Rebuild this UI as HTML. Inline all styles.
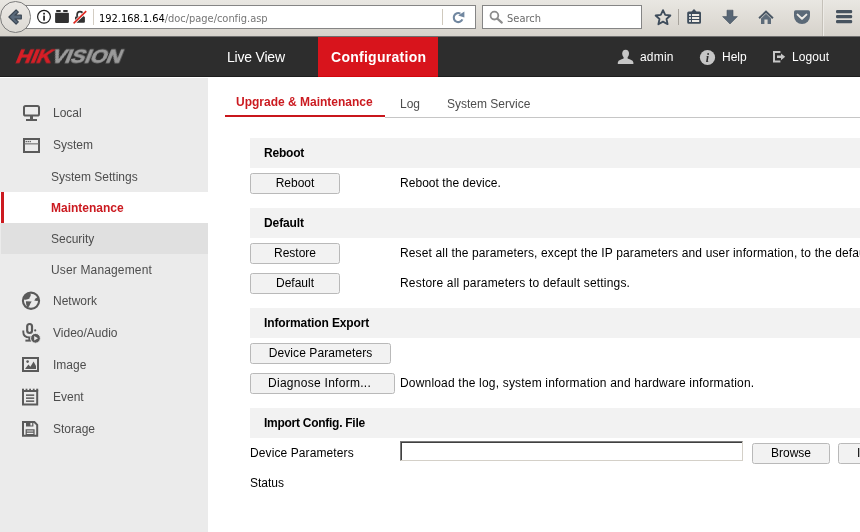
<!DOCTYPE html>
<html>
<head>
<meta charset="utf-8">
<title>Configuration</title>
<style>
html,body{margin:0;padding:0;}
body{width:860px;height:532px;overflow:hidden;position:relative;background:#fff;font-family:"Liberation Sans",sans-serif;font-size:12px;color:#000;}
div,span{box-sizing:border-box;}
.abs{position:absolute;white-space:nowrap;}
/* browser chrome */
#chrome{position:absolute;left:0;top:0;width:860px;height:36px;background:linear-gradient(#e9e7e2,#d6d2cb);}
#urlbar{position:absolute;left:20px;top:5px;width:456px;height:24px;background:#fff;border:1px solid #858585;border-left:none;}
#back{position:absolute;left:-0.5px;top:1px;width:31.5px;height:31.5px;border-radius:50%;background:linear-gradient(#ebe9e5,#dddad4);border:1px solid #7c7c7c;}
#search{position:absolute;left:482px;top:5px;width:160px;height:24px;background:#fff;border:1px solid #858585;}
.ctext{font-family:"DejaVu Sans Condensed","DejaVu Sans","Liberation Sans",sans-serif;font-size:11px;}
/* header */
#hdr{position:absolute;left:0;top:36px;width:860px;height:41px;background:#2d2d2d;border-bottom:1px solid #1d1d1d;}
#cfg{position:absolute;left:318px;top:0;width:120px;height:41px;background:#d8141c;border-bottom:1px solid #d2050d;}
.nav{position:absolute;color:#fff;font-size:14px;line-height:16px;white-space:nowrap;}
/* sidebar */
#side{position:absolute;left:0;top:77px;width:208px;height:455px;background:#ebebeb;}
.mi{position:absolute;left:0;width:208px;height:31px;line-height:31px;color:#4d4d4d;font-size:12px;white-space:nowrap;}
.mi span{position:absolute;left:53px;top:1px;}
.sub span{left:51px;}
/* main */
.sec{position:absolute;left:250px;width:610px;height:30px;background:#f2f2f2;font-weight:bold;font-size:12px;line-height:30px;padding-left:14px;white-space:nowrap;}
.btn{position:absolute;left:250px;width:90px;height:21px;border:1px solid #b9b9b9;border-radius:2.5px;background:#f2f2f2;text-align:center;font-size:12px;line-height:19px;white-space:nowrap;}
.txt{position:absolute;font-size:12px;line-height:14px;white-space:nowrap;}
.mi span,.txt,.btn,.sec,.nav,.ctext,#logo,.tab{will-change:transform;}
</style>
</head>
<body>
<div id="chrome">
  <div id="urlbar"></div>
  <div id="search"></div>
  <div id="back"></div>
  <svg class="abs" style="left:0;top:0;" width="860" height="36" viewBox="0 0 860 36">
    <!-- back arrow -->
    <path d="M8.9 17 L16.1 9.9 L18.3 12.1 L15 15.2 L21.3 15.2 L21.3 18.8 L15 18.8 L18.3 21.9 L16.1 24.1 Z" fill="#5a6a7b" stroke="#3a4653" stroke-width="1.2" stroke-linejoin="round"/>
    <!-- info -->
    <circle cx="44" cy="16.8" r="6.4" fill="#fff" stroke="#1d1d1d" stroke-width="1.2"/>
    <rect x="43.2" y="15.6" width="1.7" height="5" fill="#1d1d1d"/>
    <rect x="43.2" y="12.8" width="1.7" height="1.7" fill="#1d1d1d"/>
    <!-- brick -->
    <rect x="55.1" y="12.7" width="13.8" height="10.2" rx="0.8" fill="#313131"/>
    <rect x="56.1" y="10.1" width="4.7" height="1.8" rx="0.6" fill="#313131"/>
    <rect x="63.1" y="10.1" width="4.7" height="1.8" rx="0.6" fill="#313131"/>
    <!-- lock w/ slash -->
    <rect x="75" y="16.5" width="9.9" height="6.2" rx="1" fill="#313131"/>
    <path d="M77.1 16.8 v-2 a2.9 3.1 0 0 1 5.8 0 v2" fill="none" stroke="#313131" stroke-width="1.7"/>
    <path d="M73.2 23.8 L86.6 10.8" stroke="#fff" stroke-width="3"/>
    <path d="M73.6 23.4 L86.2 11.1" stroke="#dc261e" stroke-width="1.6"/>
    <!-- separators in urlbar -->
    <rect x="93" y="9" width="1" height="16" fill="#d3cdc3"/>
    <rect x="442" y="9" width="1" height="16" fill="#cfc9bd"/>
    <!-- reload -->
    <path d="M462.4 19.4 A4.5 4.5 0 1 1 460.4 13.6" fill="none" stroke="#7187a0" stroke-width="2.1"/>
    <path d="M458.2 15.6 L464.4 11.4 L464.4 17.6 Z" fill="#7187a0"/>
    <!-- magnifier -->
    <circle cx="494.4" cy="15.6" r="3.9" fill="none" stroke="#8c8c8c" stroke-width="1.8"/>
    <path d="M497.3 18.6 L501.8 22.6" stroke="#8c8c8c" stroke-width="2.2" stroke-linecap="round"/>
    <!-- star -->
    <path d="M663.0 10.1 L665.2 14.9 L670.4 15.5 L666.5 19.0 L667.6 24.2 L663.0 21.6 L658.4 24.2 L659.5 19.0 L655.6 15.5 L660.8 14.9 Z" fill="none" stroke="#3e4c5b" stroke-width="1.8" stroke-linejoin="round"/>
    <rect x="678" y="9" width="1" height="16" fill="#a7a39c"/>
    <!-- bookmarks list -->
    <path d="M691.5 11.5 L694 9 L696.5 11.5 L699.5 11.5 Q701 11.5 701 13 L701 22.2 Q701 23.7 699.5 23.7 L688.7 23.7 Q687.2 23.7 687.2 22.2 L687.2 13 Q687.2 11.5 688.7 11.5 Z" fill="#3e4c5b"/>
    <rect x="689" y="14" width="2" height="2" fill="#cfd3d6"/>
    <rect x="692" y="14" width="7.2" height="2" fill="#efece6"/>
    <rect x="689" y="17" width="2" height="2" fill="#cfd3d6"/>
    <rect x="692" y="17" width="7.2" height="2" fill="#efece6"/>
    <rect x="689" y="20" width="2" height="2" fill="#cfd3d6"/>
    <rect x="692" y="20" width="7.2" height="2" fill="#efece6"/>
    <!-- download -->
    <path d="M727 10.2 L733 10.2 L733 16.6 L737.4 16.6 L730 24 L722.6 16.6 L727 16.6 Z" fill="#586675" stroke="#46535f" stroke-width="0.6"/>
    <!-- home -->
    <path d="M758.4 17.6 L766 10.2 L773.6 17.6 L772.2 18.9 L766 12.9 L759.8 18.9 Z" fill="#4a5764"/>
    <path d="M761 18.4 L766 13.8 L771 18.4 L771 24 L767.6 24 L767.6 19.6 L764.4 19.6 L764.4 24 L761 24 Z" fill="#5d6b79"/>
    <!-- pocket -->
    <path d="M795.6 10.2 L808.4 10.2 Q810 10.2 810 11.8 L810 16 A8 8 0 0 1 794 16 L794 11.8 Q794 10.2 795.6 10.2 Z" fill="#5b6977"/>
    <path d="M797.6 14.6 L802 18.8 L806.4 14.6" fill="none" stroke="#eceae5" stroke-width="2" stroke-linecap="round" stroke-linejoin="round"/>
    <!-- right separator -->
    <rect x="822" y="0" width="1" height="36" fill="#c5c1b9"/>
    <rect x="823" y="0" width="1" height="36" fill="#edebe7"/>
    <!-- hamburger -->
    <rect x="836" y="10" width="16.2" height="3.2" rx="1.2" fill="#47535f"/>
    <rect x="836" y="15" width="16.2" height="3.2" rx="1.2" fill="#47535f"/>
    <rect x="836" y="20" width="16.2" height="3.2" rx="1.2" fill="#47535f"/>
  </svg>
  <div class="abs ctext" style="left:99px;top:11px;line-height:16px;color:#000;letter-spacing:-0.03px;">192.168.1.64<span style="color:#757575;">/doc/page/config.asp</span></div>
  <div class="abs ctext" style="left:507px;top:11px;line-height:16px;color:#6a6a6a;">Search</div>
</div>
<div style="position:absolute;left:0;top:36px;width:860px;height:1px;background:#6e6e6e;z-index:5;"></div>
<div id="hdr">
  <div class="abs" id="logo" style="left:12.5px;top:11px;font-size:18.5px;line-height:20px;font-weight:bold;letter-spacing:-0.2px;color:#d81e26;-webkit-text-stroke:0.7px currentColor;transform-origin:0 100%;transform:skewX(-22deg) scaleX(1.135);">HIK<span style="color:#9b9b9b;-webkit-text-stroke:0.7px #9b9b9b;">VISION</span></div>
  <div class="nav" style="left:227px;top:13px;letter-spacing:-0.2px;">Live View</div>
  <div id="cfg"></div>
  <div class="nav" style="left:331px;top:13px;font-weight:bold;letter-spacing:0.27px;">Configuration</div>
  <svg class="abs" style="left:600px;top:0;will-change:transform;" width="260" height="40" viewBox="600 36 260 40">
    <!-- user -->
    <ellipse cx="625.6" cy="53.6" rx="3.4" ry="3.9" fill="#c6c6c6"/>
    <path d="M617.8 63.9 L617.8 62.4 Q617.8 60.6 621 59.6 L623.6 58.6 L623.6 56 L627.6 56 L627.6 58.6 L630.2 59.6 Q633.4 60.6 633.4 62.4 L633.4 63.9 Z" fill="#c6c6c6"/>
    <!-- help -->
    <circle cx="707.5" cy="57.5" r="7.6" fill="#c6c6c6"/>
    <text x="707.4" y="61.8" font-family="Liberation Serif, serif" font-style="italic" font-weight="bold" font-size="12" text-anchor="middle" fill="#2d2d2d">i</text>
    <!-- logout -->
    <path d="M780.4 51.9 L774 51.9 L774 61.5 L780.4 61.5" fill="none" stroke="#c6c6c6" stroke-width="2"/>
    <path d="M777 55.6 L781 55.6 L781 53.4 L785.2 56.8 L781 60.2 L781 58 L777 58 Z" fill="#c6c6c6"/>
  </svg>
  <div class="nav" style="left:640px;top:13px;font-size:12px;letter-spacing:0.2px;">admin</div>
  <div class="nav" style="left:722px;top:13px;font-size:12px;">Help</div>
  <div class="nav" style="left:792px;top:13px;font-size:12px;letter-spacing:0.1px;">Logout</div>
</div>
<div id="side">
  <svg class="abs" style="left:0;top:0;" width="60" height="455" viewBox="0 77 60 455">
    <g fill="none" stroke="#5a5a5a" stroke-width="2">
      <!-- local: monitor -->
      <rect x="24" y="106" width="15" height="9.6" rx="1.6"/>
      <!-- system: window -->
      <rect x="24" y="139" width="15" height="13"/>
      <!-- image -->
      <rect x="23" y="358" width="15" height="13"/>
      <!-- event -->
      <path d="M23 391 L37.2 391 L37.2 404.6 L23 404.6 Z"/>
      <!-- storage -->
      <path d="M23 422 L34.4 422 L37.2 424.8 L37.2 435.7 L23 435.7 Z"/>
    </g>
    <g fill="#5a5a5a">
      <!-- monitor stand -->
      <rect x="30" y="116" width="3" height="3"/>
      <rect x="26" y="119" width="11" height="2"/>
      <!-- window title bar -->
      <rect x="24" y="143.3" width="15" height="1.1" fill="#6e6e6e"/>
      <rect x="25.6" y="140.9" width="1.3" height="1.3" /><rect x="27.6" y="140.9" width="1.3" height="1.3"/><rect x="29.6" y="140.9" width="1.3" height="1.3"/>
      <!-- network globe -->
      <circle cx="31" cy="300.75" r="8.1" fill="none" stroke="#5a5a5a" stroke-width="2.1"/>
      <path d="M23.6 298 L24.6 295.4 L27 293.4 L30.9 294.2 L30.5 296.2 L29.7 297.2 L29.5 298.6 L27.6 299.3 L25.6 299.7 L23.8 299.6 Z"/>
      <path d="M25.9 301.2 L31.7 301.4 L30.4 303.6 L29.1 306.6 L27.4 307.4 L26.2 304.6 Z"/>
      <path d="M38.2 296.8 L35.6 298.6 L34.2 300.4 L37 300.9 L38.6 300.4 Z"/>
      <!-- mic -->
      <rect x="26.1" y="323" width="7" height="11" rx="3.5"/>
      <rect x="28.4" y="337" width="2.2" height="3.4"/>
      <rect x="25.4" y="339.6" width="5.6" height="2"/>
      <circle cx="35.2" cy="330.4" r="1.1"/>
      <!-- image mountains & sun -->
      <path d="M25 369 L28.4 364.4 L30.4 366.8 L33.6 361.6 L36 366 L36 369 Z"/>
      <circle cx="27.6" cy="361.6" r="1.3"/>
      <!-- event teeth -->
      <rect x="22" y="388.7" width="2" height="2.6"/><rect x="25.6" y="388.7" width="1.8" height="2.6"/><rect x="29.2" y="388.7" width="1.8" height="2.6"/><rect x="32.8" y="388.7" width="1.8" height="2.6"/><rect x="36.2" y="388.7" width="2" height="2.6"/>
      <rect x="26" y="394.4" width="8.2" height="1.5"/><rect x="26" y="397.4" width="8.2" height="1.5"/><rect x="26" y="400.4" width="8.2" height="1.5"/>
      <!-- storage details -->
      <path d="M26 422 L33.4 422 L33.4 426.6 L26 426.6 Z M30.4 423 L30.4 425.6 L32.2 425.6 L32.2 423 Z" fill-rule="evenodd"/>
      <path d="M25.6 429.2 L34.6 429.2 L34.6 435 L25.6 435 Z M26.8 430.4 L26.8 431.4 L33.4 431.4 L33.4 430.4 Z M26.8 432.8 L26.8 433.9 L33.4 433.9 L33.4 432.8 Z" fill-rule="evenodd"/>
    </g>
    <!-- mic holder -->
    <path d="M23.3 330.4 L23.3 332 Q23.3 337.4 29.6 337.4 L32 337.4" fill="none" stroke="#5a5a5a" stroke-width="1.9"/>
    <!-- mic inner highlight -->
    <rect x="28.3" y="325.1" width="2.6" height="6.8" rx="1.3" fill="#ebebeb"/>
    <!-- play badge -->
    <circle cx="35.5" cy="338.3" r="4.9" fill="#5a5a5a" stroke="#ebebeb" stroke-width="1"/>
    <!-- play triangle -->
    <path d="M34.2 336 L38 338.3 L34.2 340.6 Z" fill="#ebebeb"/>
  </svg>
  <div class="mi" style="top:20px;"><span>Local</span></div>
  <div class="mi" style="top:52px;"><span>System</span></div>
  <div class="mi sub" style="top:84px;"><span>System Settings</span></div>
  <div class="mi sub" style="top:115px;background:#fff;color:#cb1a20;font-weight:bold;"><div style="position:absolute;left:1px;top:0;width:3px;height:31px;background:#cc1a20;"></div><span>Maintenance</span></div>
  <div class="mi sub" style="top:146px;left:1px;width:207px;background:#e0e0e0;"><span style="left:50px;">Security</span></div>
  <div class="mi sub" style="top:177px;"><span style="letter-spacing:0.15px;">User Management</span></div>
  <div class="mi" style="top:208px;"><span>Network</span></div>
  <div class="mi" style="top:240px;"><span>Video/Audio</span></div>
  <div class="mi" style="top:272px;"><span>Image</span></div>
  <div class="mi" style="top:304px;"><span>Event</span></div>
  <div class="mi" style="top:336px;"><span>Storage</span></div>
</div>
<div style="position:absolute;left:0;top:77px;width:208px;height:1px;background:#fff;"></div>
<div id="main">
  <div class="abs" style="left:385px;top:117px;width:475px;height:1px;background:#c6c6c6;"></div>
  <div class="abs" style="left:225px;top:115px;width:160px;height:2px;background:#c9161c;"></div>
  <div class="abs tab" style="left:236px;top:95px;font-size:12px;line-height:15px;font-weight:bold;color:#cb1a20;">Upgrade &amp; Maintenance</div>
  <div class="abs tab" style="left:400px;top:97px;font-size:12px;line-height:14px;color:#4d4d4d;">Log</div>
  <div class="abs tab" style="left:447px;top:97px;font-size:12px;line-height:14px;color:#4d4d4d;">System Service</div>

  <div class="sec" style="top:138px;letter-spacing:-0.2px;">Reboot</div>
  <div class="btn" style="top:173px;">Reboot</div>
  <div class="txt" style="left:400px;top:176px;letter-spacing:0.04px;">Reboot the device.</div>

  <div class="sec" style="top:208px;letter-spacing:-0.1px;">Default</div>
  <div class="btn" style="top:243px;">Restore</div>
  <div class="txt" style="left:400px;top:246px;letter-spacing:0.14px;">Reset all the parameters, except the IP parameters and user information, to the default settings.</div>
  <div class="btn" style="top:273px;">Default</div>
  <div class="txt" style="left:400px;top:276px;letter-spacing:0.186px;">Restore all parameters to default settings.</div>

  <div class="sec" style="top:308px;letter-spacing:-0.12px;">Information Export</div>
  <div class="btn" style="top:343px;width:141px;letter-spacing:0.1px;">Device Parameters</div>
  <div class="btn" style="top:373px;width:145px;letter-spacing:0.28px;text-align:left;padding-left:17px;">Diagnose Inform...</div>
  <div class="txt" style="left:400px;top:376px;letter-spacing:0.184px;">Download the log, system information and hardware information.</div>

  <div class="sec" style="top:408px;letter-spacing:-0.27px;">Import Config. File</div>
  <div class="txt" style="left:250px;top:446px;letter-spacing:0.1px;">Device Parameters</div>
  <div class="abs" style="left:400px;top:441px;width:343px;height:20px;background:#fff;border-top:1px solid #7a7a7a;border-left:1px solid #7a7a7a;border-right:1px solid #d4d0c8;border-bottom:1px solid #d4d0c8;box-shadow:inset 1px 1px 0 #404040;"></div>
  <div class="btn" style="left:752px;top:443px;width:78px;">Browse</div>
  <div class="btn" style="left:838px;top:443px;width:78px;text-align:left;padding-left:18px;">Import</div>
  <div class="txt" style="left:250px;top:476px;">Status</div>
</div>
</body>
</html>
